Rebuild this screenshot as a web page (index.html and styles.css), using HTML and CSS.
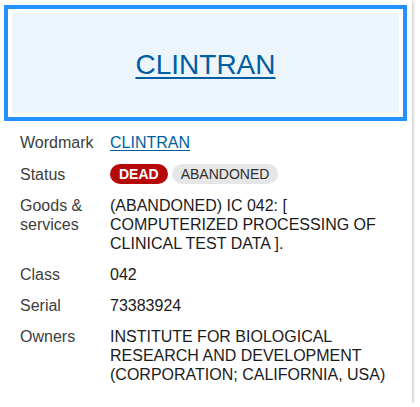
FILE: index.html
```html
<!DOCTYPE html>
<html lang="en">
<head>
<meta charset="utf-8">
<title>CLINTRAN</title>
<link rel="stylesheet" href="styles.css">
</head>
<body>
<div class="card">
  <div class="hero"><a class="hero-link" href="#">CLINTRAN</a></div>
  <dl class="details">
    <dt>Wordmark</dt>
    <dd><a class="link" href="#">CLINTRAN</a></dd>
    <dt class="status-label">Status</dt>
    <dd class="badges"><span class="badge badge-dead">DEAD</span><span class="badge badge-gray">ABANDONED</span></dd>
    <dt>Goods &amp; services</dt>
    <dd>(ABANDONED) IC 042: [ COMPUTERIZED PROCESSING OF CLINICAL TEST DATA ].</dd>
    <dt>Class</dt>
    <dd>042</dd>
    <dt>Serial</dt>
    <dd>73383924</dd>
    <dt>Owners</dt>
    <dd>INSTITUTE FOR BIOLOGICAL RESEARCH AND DEVELOPMENT (CORPORATION; CALIFORNIA, USA)</dd>
  </dl>
</div>
</body>
</html>
```
FILE: styles.css
```css
html, body {
  margin: 0;
  padding: 0;
  background: #ffffff;
}
body {
  font-family: "Liberation Sans", Arial, sans-serif;
  color: #1b1b1b;
}
.card {
  box-sizing: border-box;
  width: 412px;
  height: 403px;
  background: #ffffff;
  box-shadow: 0 1px 4px rgba(0, 0, 0, 0.4);
  padding: 13px 13px 0 12px;
}
.hero {
  height: 100px;
  background: #edf5fc;
  outline: 4px solid #2491ff;
  outline-offset: 4px;
  display: flex;
  align-items: center;
  justify-content: center;
}
.hero-link {
  font-size: 28px;
  color: #005ea2;
  text-decoration: underline;
  text-decoration-thickness: 2px;
  text-underline-offset: 3px;
  padding-top: 3px;
}
.details {
  margin: 20px 0 0 0;
  padding: 0 4px 0 8px;
  display: grid;
  grid-template-columns: 90px 1fr;
  row-gap: 12px;
  font-size: 16px;
  line-height: 19px;
}
.details dt {
  margin: 0;
  color: #3d3d3d;
}
.details dd {
  margin: 0;
  color: #1b1b1b;
}
.status-label {
  padding-top: 0.5px;
}
.link {
  color: #005ea2;
  text-decoration: underline;
  text-underline-offset: 2px;
}
.badges {
  display: flex;
  gap: 4px;
  align-items: center;
  height: 20px;
}
.badge {
  display: inline-flex;
  align-items: center;
  height: 20px;
  padding: 0 9px;
  border-radius: 10px;
  font-size: 14px;
  line-height: 20px;
}
.badge-dead {
  background: #b50909;
  color: #ffffff;
  font-weight: bold;
}
.badge-gray {
  background: #e6e6e6;
  color: #2e2e2e;
}
```
